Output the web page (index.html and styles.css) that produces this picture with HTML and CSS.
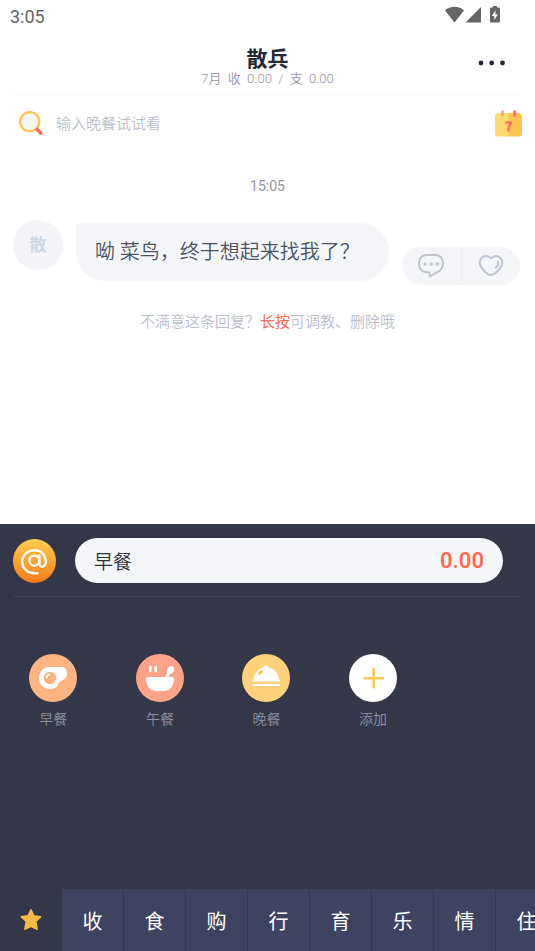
FILE: index.html
```html
<!DOCTYPE html>
<html lang="zh-CN">
<head>
<meta charset="utf-8">
<meta name="viewport" content="width=device-width, initial-scale=1">
<title>散兵</title>
<link rel="stylesheet" href="styles.css">
</head>
<body>
<div class="app">
  <div class="status">
    <span>3:05</span>
    <svg class="status-icons" width="56" height="18" viewBox="0 0 56 18" fill="#666" aria-hidden="true">
      <path d="M0 4.500C5-.5 14-.5 19 4.500L9.500 16.500Z"/>
      <path d="M36 1v15.500H20.500Z"/>
      <path d="M48 0h4v1.500h2q1 0 1 1v13q0 1-1 1h-8q-1 0-1-1v-13q0-1 1-1h2Z"/>
      <path fill="#fff" d="M50.500 4.500 46.800 10h2.500v4l3.500-5.500h-2.300Z"/>
    </svg>
  </div>

  <header class="header">
    <h1 class="title">散兵</h1>
    <p class="summary">7月&nbsp; 收&nbsp; 0.00&nbsp; /&nbsp; 支&nbsp; 0.00</p>
    <button class="more" aria-label="更多">
      <svg width="28" height="6" viewBox="0 0 28 6" fill="#262a35"><circle cx="3" cy="3" r="2.400"/><circle cx="13.700" cy="3" r="2.400"/><circle cx="24.500" cy="3" r="2.400"/></svg>
    </button>
  </header>

  <div class="search">
    <label for="query" aria-label="搜索">
      <svg width="26" height="26" viewBox="0 0 26 26">
        <circle cx="10.700" cy="10.700" r="9.600" fill="#f4f6fa" stroke="#ffc553" stroke-width="2.300"/>
        <path d="m18.300 18.500 3.500 3.500" stroke="#ff6b5f" stroke-width="3.600" stroke-linecap="round"/>
      </svg>
    </label>
    <input id="query" class="query" type="text" placeholder="输入晚餐试试看">
    <button class="calendar" aria-label="日历">
      <svg width="27" height="27" viewBox="0 0 27 27">
        <path d="M3.500 3H14v23.500H3.500Q0 26.500 0 23v-16.500Q0 3 3.500 3" fill="#ffdc73"/>
        <path d="M13.500 3h10Q27 3 27 6.500v16.500q0 3.500-3.500 3.500h-10Z" fill="#ffc553"/>
        <path d="M7.500 1.700v3.600" stroke="#ffa87c" stroke-width="3" stroke-linecap="round"/>
        <path d="M19.700 1.700v3.600" stroke="#ff7162" stroke-width="3" stroke-linecap="round"/>
        <path d="M11.200 12.500h5q-2.500 3.500-3 8" fill="none" stroke="#ff7162" stroke-width="2.400" stroke-linecap="round" stroke-linejoin="round"/>
      </svg>
    </button>
  </div>

  <main class="chat">
    <time class="time">15:05</time>
    <div class="message">
      <div class="avatar">散</div>
      <p class="bubble">呦 菜鸟，终于想起来找我了？</p>
      <div class="actions">
        <button class="action" aria-label="评论">
          <svg width="28" height="26" viewBox="0 0 28 26" fill="none" stroke="#c0c4d0" stroke-width="2" stroke-linejoin="round">
            <path d="M10 2h8c5.500 0 8 3.500 8 8.500 0 5.500-3 8-7.500 9.500L13 23.500 12.500 19.500C6 19.500 2 16.500 2 10.500 2 5.500 4.500 2 10 2Z"/>
            <g fill="#c0c4d0" stroke="none"><circle cx="8" cy="11" r="1.700"/><circle cx="14.200" cy="11" r="1.700"/><circle cx="20.400" cy="11" r="1.700"/></g>
          </svg>
        </button>
        <button class="action" aria-label="喜欢">
          <svg width="26" height="24" viewBox="0 0 26 24" fill="none" stroke="#c0c4d0" stroke-width="2" stroke-linecap="round" stroke-linejoin="round">
            <path d="M13 4.200C9.500 1.500 6 1.500 3.700 4 .8 7.300 1.500 11.500 4.500 15c3 3.500 6 6 8.500 6s5.500-2.500 8.500-6c3-3.500 3.700-7.700.8-11C20 1.500 16.500 1.500 13 4.200Z"/>
            <path d="M20 7.500c.8 2.500-.2 4.500-2.200 6.300"/>
          </svg>
        </button>
      </div>
    </div>
    <p class="hint">不满意这条回复？<strong>长按</strong>可调教、删除哦</p>
  </main>

  <section class="panel">
    <div class="entry">
      <button class="mention" aria-label="提及">
        <svg width="43" height="44" viewBox="0 0 43 44">
          <defs><linearGradient id="gold" x1="0" y1="0" x2="0" y2="1"><stop offset="0" stop-color="#ffcf51"/><stop offset="1" stop-color="#f67a1b"/></linearGradient></defs>
          <ellipse cx="21.500" cy="22" rx="21.500" ry="22" fill="url(#gold)"/>
          <g fill="none" stroke-width="2.500" stroke-linecap="round" stroke-linejoin="round">
            <g stroke="#dc7010" opacity=".35" transform="translate(0 1)"><circle cx="21.300" cy="21.700" r="5"/><path d="M26.500 16.500v8.500c0 4.500 6.200 3.500 6.200-2.500 0-6.500-4.700-11.200-11.200-11.200S9.200 16.500 9.200 22.800 14.500 34.300 21 34.300h3.500"/></g>
            <g stroke="#fffaf0"><circle cx="21.300" cy="21.700" r="5"/><path d="M26.500 16.500v8.500c0 4.500 6.200 3.500 6.200-2.500 0-6.500-4.700-11.200-11.200-11.200S9.200 16.500 9.200 22.800 14.500 34.300 21 34.300h3.500"/></g>
          </g>
        </svg>
      </button>
      <div class="field">
        <input class="note" type="text" value="早餐" aria-label="备注">
        <output class="amount">0.00</output>
      </div>
    </div>

    <div class="categories">
      <button class="category">
        <svg width="48" height="48" viewBox="0 0 48 48">
          <circle cx="24" cy="24" r="24" fill="#ffb482"/>
          <path d="M20 13h13c3.500 0 5.200 3 5 6.500-.3 5-4 6.500-7 8-2 1-1.800 7.500-10 7.500-6.500 0-11-4.500-11-11 0-7 5-11 10-11Z" fill="#fff"/>
          <circle cx="21" cy="24" r="6.200" fill="#ffb482"/>
          <path d="M17.500 24q0-3 3.200-3.500" fill="none" stroke="#fff" stroke-width="1.500" stroke-linecap="round"/>
        </svg>
        <span>早餐</span>
      </button>
      <button class="category">
        <svg width="48" height="48" viewBox="0 0 48 48">
          <circle cx="24" cy="24" r="24" fill="#ffa28a"/>
          <path d="M14.300 13v4M19.700 13v4" stroke="#fff" stroke-width="2.600" stroke-linecap="round"/>
          <path d="M29 23l2.300-4.500c-1-3 1-6.500 4-6.500 3.500 0 3.700 5 .8 7.200L33.500 20.500 32.500 23Z" fill="#fff"/>
          <path d="M12 23h24q2 0 2 2c0 6.500-4 12-10 12h-8c-6 0-10-5.500-10-12q0-2 2-2Z" fill="#fff"/>
        </svg>
        <span>午餐</span>
      </button>
      <button class="category">
        <svg width="48" height="48" viewBox="0 0 48 48">
          <circle cx="24" cy="24" r="24" fill="#ffd17b"/>
          <path d="M11.500 27c.3-7.500 4-12 10-13.500.6-1.500 1.500-2.300 2.700-2.300s2.100.8 2.700 2.300c6 1.500 9.700 6 10 13.500Z" fill="#fff"/>
          <path d="m17.500 19.300 2.300-1.900" stroke="#ffc04c" stroke-width="2.600" stroke-linecap="round"/>
          <path d="M11.500 26.500h25.500M11.500 31h25.500" stroke="#fff" stroke-width="2.200" stroke-linecap="round"/>
        </svg>
        <span>晚餐</span>
      </button>
      <button class="category">
        <svg width="48" height="48" viewBox="0 0 48 48">
          <circle cx="24" cy="24" r="24" fill="#fff"/>
          <path d="M24.700 15v18.500M15.500 24.200H34" stroke="#ffc95c" stroke-width="2.600" stroke-linecap="round"/>
        </svg>
        <span>添加</span>
      </button>
    </div>

    <nav class="tabs">
      <button class="tab tab-active" aria-label="收藏">
        <svg width="24" height="24" viewBox="0 0 24 24" fill="#f4ba47" stroke="#f4ba47" stroke-width="1.600" stroke-linejoin="round"><path d="m12 1.800 2.900 6.100 6.700.9-4.900 4.700 1.400 7.700-6.100-3-6.100 3 1.400-7.700-4.900-4.700 6.700-.9Z"/></svg>
      </button>
      <button class="tab">收</button>
      <button class="tab">食</button>
      <button class="tab">购</button>
      <button class="tab">行</button>
      <button class="tab">育</button>
      <button class="tab">乐</button>
      <button class="tab">情</button>
      <button class="tab">住</button>
    </nav>
  </section>
</div>
</body>
</html>
```

FILE: styles.css
```css
* {
  box-sizing: border-box;
  margin: 0;
}

body,
button,
input {
  font-family: Roboto, "Noto Sans CJK SC", sans-serif;
  font-weight: 350;
}

body {
  background: #fff;
}

button {
  padding: 0;
  border: 0;
  background: none;
  color: inherit;
}

input {
  min-width: 0;
  padding: 0;
  border: 0;
  outline: 0;
  background: none;
}

svg {
  display: block;
}

.app {
  display: flex;
  flex-direction: column;
  min-height: 100vh;
  overflow: hidden;
}

.status {
  display: flex;
  justify-content: space-between;
  align-items: center;
  height: 32px;
  padding: 0 34px 0 10px;
  color: #666;
  font-size: 18px;
  font-weight: 400;
}

.status-icons {
  margin-bottom: 2px;
}

.header {
  position: relative;
  height: 63px;
  margin: 0 13px;
  padding-top: 15px;
  border-bottom: 1px solid #f7f7f9;
  text-align: center;
}

.title {
  color: #262a35;
  font-size: 21px;
  line-height: 24px;
}

.summary {
  color: #9496a6;
  font-size: 13px;
  line-height: 16px;
}

.more {
  position: absolute;
  top: 28px;
  right: 16px;
}

.search {
  display: flex;
  align-items: center;
  height: 57px;
  padding: 0 13px 0 19px;
}

.query {
  flex: 1;
  margin-left: 11px;
  font-size: 15px;
}

.query::placeholder {
  color: #babfcd;
}

.chat {
  flex: 1;
  padding: 24px 13px 0;
  text-align: center;
}

.time {
  display: block;
  color: #9496a6;
  font-size: 14px;
  font-weight: 400;
  line-height: 20px;
}

.message {
  display: flex;
  align-items: flex-start;
  gap: 13px;
  margin-top: 24px;
}

.avatar {
  width: 50px;
  border-radius: 50%;
  background: #f3f5f9;
  color: #cfd6e5;
  font-size: 17px;
  font-weight: 700;
  line-height: 50px;
}

.bubble {
  flex: 1;
  margin-top: 3px;
  padding: 0 19px;
  border-radius: 4px 29px 29px 29px;
  background: #f4f6fa;
  color: #4d525f;
  font-size: 20px;
  line-height: 58px;
  text-align: left;
  white-space: nowrap;
}

.actions {
  display: flex;
  align-self: flex-end;
  width: 118px;
  height: 38px;
  margin: 0 2px -4px 0;
  border-radius: 19px;
  background: #f4f6fa;
}

.action {
  display: grid;
  flex: 1;
  place-items: center;
}

.action:first-child {
  border-right: 1px solid #eef0f5;
}

.hint {
  margin-top: 28px;
  color: #babfcd;
  font-size: 15px;
  line-height: 26px;
}

.hint strong {
  color: #ff6b55;
  font-weight: 400;
}

.panel {
  display: flex;
  flex-direction: column;
  min-height: 427px;
  background: #343747;
}

.entry {
  display: flex;
  align-items: center;
  gap: 19px;
  margin: 0 13px;
  padding: 14px 19px 13px 0;
  border-bottom: 1px solid #3e4260;
}

.field {
  display: flex;
  flex: 1;
  align-items: center;
  height: 45px;
  padding: 0 19px;
  border-radius: 23px;
  background: #f4f6fa;
}

.note {
  flex: 1;
  color: #2d303c;
  font-size: 19px;
}

.amount {
  color: #ff6b55;
  font-size: 22px;
  font-weight: 600;
}

.categories {
  display: grid;
  flex: 1;
  grid-template-columns: repeat(5, 20%);
  align-items: start;
  padding: 57px 2px 0 0;
}

.category {
  display: flex;
  flex-direction: column;
  align-items: center;
  gap: 7px;
  color: #8e91a1;
  font-size: 14px;
  line-height: 20px;
}

.tabs {
  display: flex;
  overflow: hidden;
}

.tab {
  display: grid;
  flex: 0 0 62px;
  place-items: center;
  height: 62px;
  border-right: 1px solid #343850;
  background: #3e4360;
  color: #fff;
  font-size: 20px;
  font-weight: 400;
}

.tab-active {
  border: 0;
  background: none;
}
```
